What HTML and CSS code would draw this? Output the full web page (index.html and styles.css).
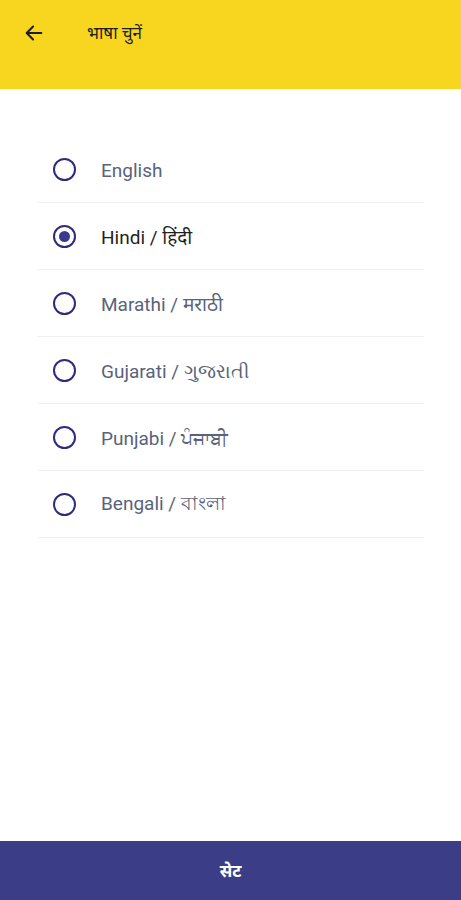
FILE: index.html
```html
<!DOCTYPE html>
<html lang="hi">
    <head>
        <meta charset="UTF-8"/>
        <meta name="viewport" content="width=device-width, initial-scale=1.0"/>
        <title>भाषा चुनें</title>
        <link rel="stylesheet" href="styles.css">
    </head>
    <body>
        <header class="topbar">
            <button class="back" aria-label="back">
                <svg width="22" height="22" viewBox="0 0 24 24">
                    <path d="M20 12H5M11 5l-7 7 7 7" fill="none" stroke="#1d1d1d" stroke-width="2.2" stroke-linecap="round" stroke-linejoin="round"/>
                </svg>
            </button>
            <span class="title">भाषा चुनें</span>
        </header>
        <ul class="languages">
            <li class="lang"><span class="radio"></span><span class="name">English</span></li>
            <li class="lang selected"><span class="radio"></span><span class="name">Hindi / हिंदी</span></li>
            <li class="lang"><span class="radio"></span><span class="name">Marathi / मराठी</span></li>
            <li class="lang"><span class="radio"></span><span class="name">Gujarati / ગુજરાતી</span></li>
            <li class="lang"><span class="radio"></span><span class="name">Punjabi / ਪੰਜਾਬੀ</span></li>
            <li class="lang"><span class="radio"></span><span class="name">Bengali / বাংলা</span></li>
        </ul>
        <div class="set-btn">सेट</div>
    </body>
</html>
```

FILE: styles.css
```css
body {
    margin: 0;
    font-family: Roboto, "Noto Sans", sans-serif;
    background: #fff;
    height: 900px;
    position: relative;
}

.topbar {
    display: flex;
    align-items: center;
    height: 89px;
    padding-bottom: 24px;
    box-sizing: border-box;
    background: #f8d51e;
}

.back {
    border: none;
    background: none;
    padding: 0;
    margin-left: 23px;
    display: flex;
}

.title {
    margin-left: 42px;
    font-size: 17px;
    font-weight: 400;
    color: #1d1d1d;
}

.languages {
    list-style: none;
    margin: 47px 37px 0;
    padding: 0;
}

.lang {
    display: flex;
    align-items: center;
    height: 66px;
    border-bottom: 1px solid #f0f0f2;
    padding-left: 16px;
}

.radio {
    width: 19px;
    height: 19px;
    border: 2px solid #2f2b7c;
    border-radius: 50%;
    box-sizing: content-box;
    position: relative;
    flex-shrink: 0;
}

.selected .radio::after {
    content: "";
    position: absolute;
    left: 4px;
    top: 4px;
    width: 11px;
    height: 11px;
    border-radius: 50%;
    background: #3a3a8c;
}

.name {
    margin-left: 25px;
    padding-top: 2px;
    font-size: 19px;
    color: #59637a;
}

.selected .name {
    color: #1f1f1f;
}

.set-btn {
    position: absolute;
    left: 0;
    right: 0;
    bottom: 0;
    height: 59px;
    background: #3b3d87;
    color: #fff;
    font-size: 17px;
    font-weight: 700;
    display: flex;
    align-items: center;
    justify-content: center;
}
```
